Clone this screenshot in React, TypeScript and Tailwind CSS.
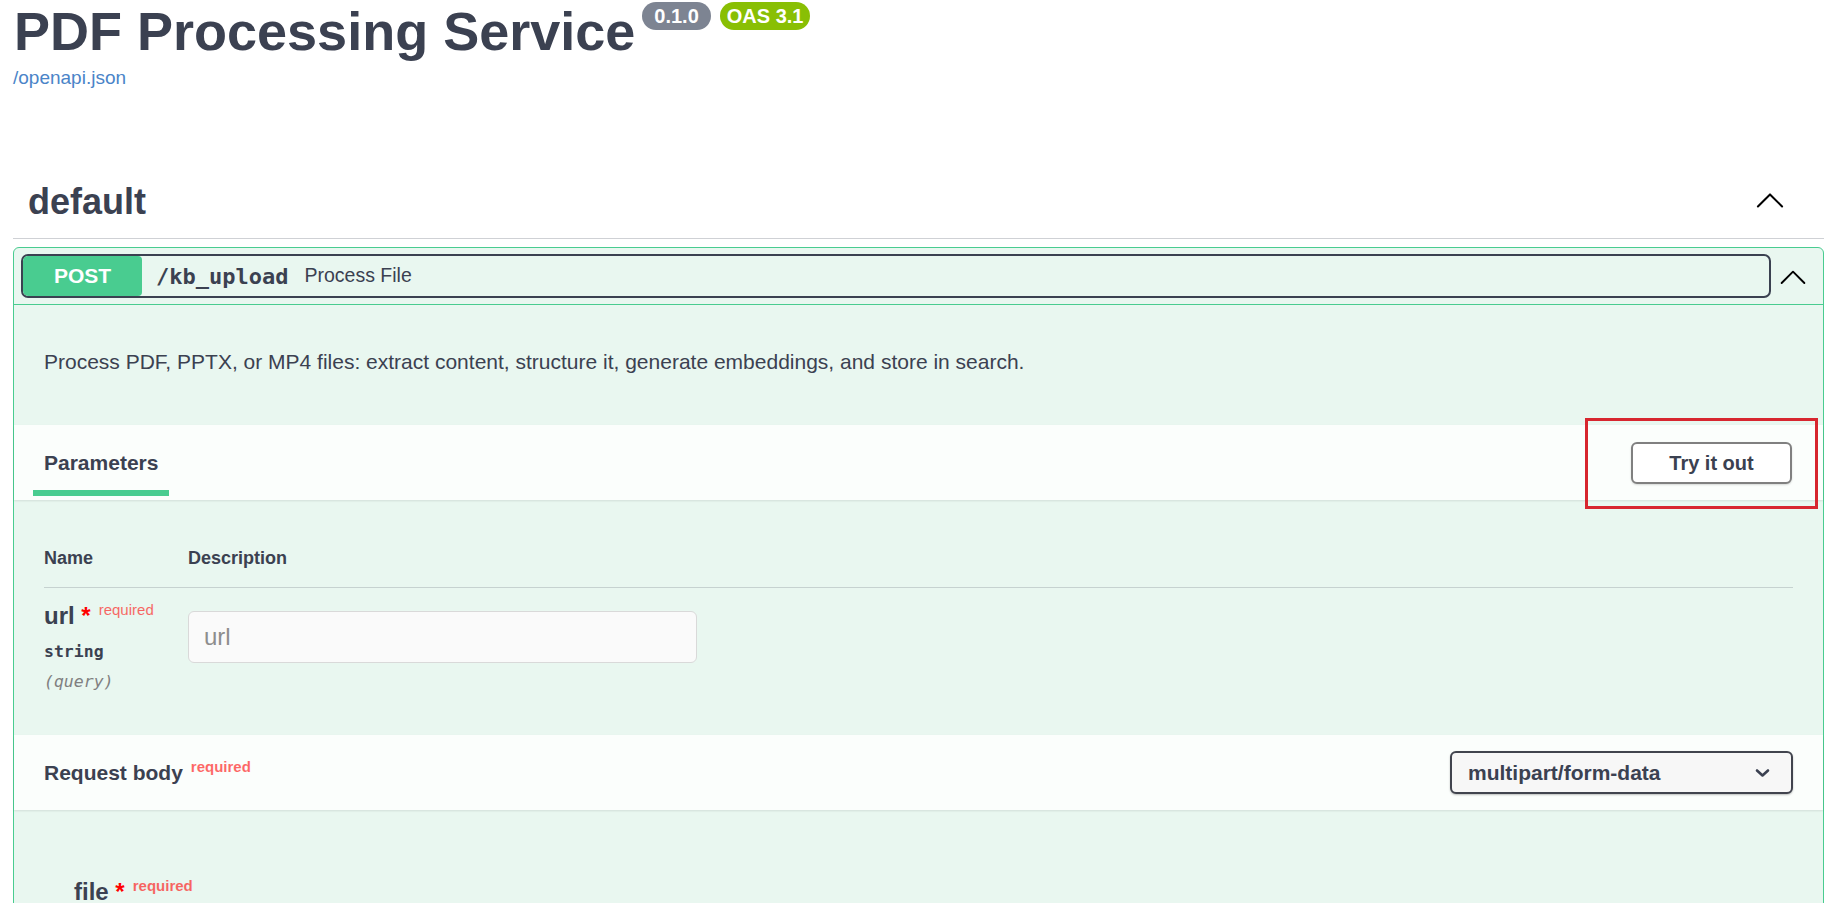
import React from 'react';

const ChevronUp: React.FC<{ size?: number }> = ({ size = 34 }) => (
  <svg width={size} height={size} viewBox="0 0 20 20" fill="none">
    <path d="M2.9 14.4L10 7.3l7.1 7.1" stroke="#000" strokeWidth="1.2" strokeLinecap="round" strokeLinejoin="round" />
  </svg>
);

const ChevronDown: React.FC = () => (
  <svg width="15" height="10" viewBox="0 0 15 10" fill="none">
    <path d="M2 2.5l5.5 5 5.5-5" stroke="#3b4151" strokeWidth="2.6" strokeLinecap="round" strokeLinejoin="round" />
  </svg>
);

const App: React.FC = () => {
  return (
    <div className="relative min-h-screen bg-white pl-[13px] pr-[7px] font-['Liberation_Sans',Arial,sans-serif] text-[#3b4151]">
      {/* info */}
      <div className="flex items-start">
        <h1 className="ml-[1px] mt-[4px] text-[54px] leading-[54px] font-bold">PDF Processing Service</h1>
        <div className="ml-[7px] mt-[2px] flex gap-[9px]">
          <span className="h-[28px] rounded-full bg-[#7d8492] px-[12px] text-[20px] leading-[28px] font-bold text-white">0.1.0</span>
          <span className="h-[28px] rounded-full bg-[#89bf04] px-[7px] text-[20px] leading-[28px] font-bold text-white">OAS 3.1</span>
        </div>
      </div>
      <a className="mt-[9px] block w-fit text-[19px] leading-[22px] text-[#4a84c8]">/openapi.json</a>

      {/* tag */}
      <div className="mt-[80px] flex items-center justify-between border-b border-[#cfd1d5] pl-[15px] pt-[15px] pb-[18px]">
        <h3 className="text-[36px] leading-[36px] font-bold">default</h3>
        <div className="mr-[37px] -mt-[6px]">
          <ChevronUp />
        </div>
      </div>

      {/* operation */}
      <div className="mt-[8px] rounded-[6px] border border-[#49cc90] bg-[#e9f7f0]">
        <div className="flex items-center border-b border-[#49cc90] pt-[6px] pb-[6px] pl-[7px] pr-[14px]">
          <div className="flex h-[44px] flex-1 items-center overflow-hidden rounded-[7px] border-2 border-[#3b4151]">
            <div className="flex w-[119px] self-stretch items-center justify-center rounded-[4px] bg-[#49cc90] text-[21px] font-bold text-white">
              POST
            </div>
            <span className="ml-[14px] font-['DejaVu_Sans_Mono',monospace] text-[22px] font-bold">/kb_upload</span>
            <span className="ml-[16px] text-[19.5px]">Process File</span>
          </div>
          <div className="ml-[6px]">
            <ChevronUp size={32} />
          </div>
        </div>

        <div className="px-[30px] pt-[45px] pb-[51px] text-[21px] leading-[24px]">
          Process PDF, PPTX, or MP4 files: extract content, structure it, generate embeddings, and store in search.
        </div>

        {/* parameters header */}
        <div className="relative flex h-[75px] items-stretch justify-between bg-[#fbfefc] shadow-[0_1px_2px_rgba(0,0,0,0.1)]">
          <div className="ml-[19px] flex flex-col justify-end">
            <span className="px-[11px] text-[21px] leading-[24px] font-bold">Parameters</span>
            <div className="mt-[15px] mb-[4px] h-[6px] bg-[#49cc90]" />
          </div>
          <button className="mr-[31px] mt-[1px] h-[42px] w-[161px] self-center rounded-[6px] border-2 border-[#808080] bg-white text-[20px] font-bold text-[#3b4151] shadow-[0_1px_2px_rgba(0,0,0,0.15)]">
            Try it out
          </button>
        </div>

        {/* parameters table */}
        <div className="px-[30px] pt-[47px] pb-[28px]">
          <div className="flex border-b border-[#3b4151]/20 pb-[18px] text-[18px] leading-[22px] font-bold">
            <div className="w-[144px]">Name</div>
            <div>Description</div>
          </div>
          <div className="flex pt-[14px] pb-[16px]">
            <div className="w-[144px]">
              <div className="text-[24px] leading-[28px] font-bold">
                url<span className="text-[#ff0000]">&nbsp;*</span>
                <span className="relative -top-[9px] pl-[8px] text-[15px] font-normal text-[#ff0000]/60">required</span>
              </div>
              <div className="pt-[9px] font-['DejaVu_Sans_Mono',monospace] text-[16.5px] leading-[19px] font-bold">string</div>
              <div className="pt-[11px] font-['DejaVu_Sans_Mono',monospace] text-[16.5px] leading-[19px] italic text-[#808080]">(query)</div>
            </div>
            <div>
              <input
                placeholder="url"
                className="mt-[9px] h-[52px] w-[509px] rounded-[6px] border border-[#d9d9d9] bg-[#fafafa] px-[15px] text-[24px] placeholder:text-[#8d8d8d] outline-none"
              />
            </div>
          </div>
        </div>

        {/* request body header */}
        <div className="relative flex h-[75px] items-center justify-between bg-[#fbfefc] pl-[30px] pr-[30px] shadow-[0_1px_2px_rgba(0,0,0,0.1)]">
          <div className="text-[21px] font-bold">
            Request body
            <span className="relative -top-[8px] ml-[8px] text-[15px] text-[#ff0000]/60">required</span>
          </div>
          <div className="flex h-[43px] w-[343px] items-center justify-between rounded-[6px] border-2 border-[#41444e] bg-[#f7f7f7] pl-[16px] pr-[21px] text-[21px] font-bold shadow-[0_1px_2px_rgba(0,0,0,0.25)]">
            <span>multipart/form-data</span>
            <ChevronDown />
          </div>
        </div>

        <div className="pl-[60px] pt-[68px] pb-[40px]">
          <div className="text-[24px] leading-[28px] font-bold">
            file<span className="text-[#ff0000]">&nbsp;*</span>
            <span className="relative -top-[9px] pl-[8px] text-[15px] text-[#ff0000]/60">required</span>
          </div>
        </div>
      </div>

      {/* highlight */}
      <div className="pointer-events-none absolute left-[1585px] top-[418px] h-[91px] w-[233px] border-[3px] border-[#d7262f]" />
    </div>
  );
};

export default App;
